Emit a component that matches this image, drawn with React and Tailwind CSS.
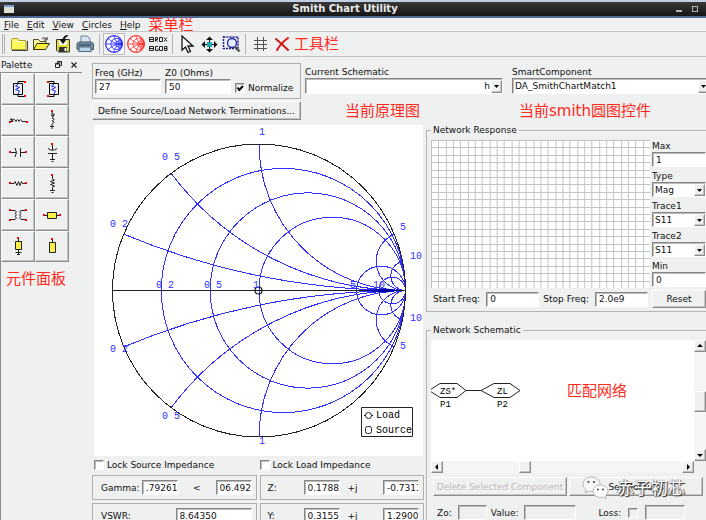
const raised =
  "border border-t-white border-l-white border-r-[#8c8c8c] border-b-[#8c8c8c] bg-[#eff0f0] shadow-[inset_-1px_-1px_0_#c4c4c4]";

const sunken =
  "border border-t-[#858585] border-l-[#858585] border-r-white border-b-white shadow-[inset_1px_1px_0_#bdbdbd]";

const noteClass = "text-[15px] leading-4 whitespace-nowrap text-[#ff2a1c]";

const Field = ({ label, value, className = "", disabled = false }) => (
  <input
    type="text"
    aria-label={label}
    defaultValue={value}
    disabled={disabled}
    className={`h-[15px] min-w-0 rounded-none pl-[3px] outline-none ${sunken} ${disabled ? "bg-[#eff0f0]" : "bg-white"} ${className}`}
  />
);

const Select = ({ id, label, value, className = "", selectClass = "" }) => (
  <span className={`relative block ${className}`}>
    <select
      id={id}
      aria-label={label}
      defaultValue={value}
      className={`h-full w-full appearance-none rounded-none bg-white pr-3 pl-[2px] outline-none ${sunken} ${selectClass}`}
    >
      <option>{value}</option>
    </select>
    <span
      className={`pointer-events-none absolute top-[2px] right-px bottom-px flex w-[11px] items-center justify-center ${raised}`}
    >
      <svg width="5" height="3" viewBox="0 0 5 3" aria-hidden>
        <path d="M0 0h5L2.5 3z" />
      </svg>
    </span>
  </span>
);

const CheckBox = ({ label, hideLabel, defaultChecked, disabled }) => (
  <label className="flex items-center gap-[3px] whitespace-nowrap">
    <span className="relative block h-[10px] w-[10px]">
      <input
        type="checkbox"
        aria-label={label}
        defaultChecked={defaultChecked}
        disabled={disabled}
        className={`peer block h-[10px] w-[10px] appearance-none ${disabled ? "bg-[#eff0f0]" : "bg-white"} ${sunken}`}
      />
      <svg
        className="pointer-events-none absolute inset-0 hidden peer-checked:block"
        viewBox="0 0 10 10"
        fill="none"
        stroke="#000"
        strokeWidth="2"
        aria-hidden
      >
        <path d="M2.5 4.5 4.3 7 8 3" />
      </svg>
    </span>
    {!hideLabel && label}
  </label>
);

const Icon = ({ children, size = 20 }) => (
  <svg width={size} height={size} viewBox="0 0 20 20" fill="none" aria-hidden>
    {children}
  </svg>
);

const smithIcon = (color) => (
  <Icon>
    <g stroke={color} strokeWidth="0.8">
      <circle cx="10" cy="10" r="8.3" fill="#fff" strokeWidth="1.2" />
      <circle cx="12.5" cy="10" r="5.6" />
      <circle cx="15" cy="10" r="3.2" />
      <path d="M1.7 10h16.6M4 4.2Q9 10 18 10Q9 10 4 15.8M10 1.7Q10 8 18 10Q10 12 10 18.3M15.5 4Q13 7.5 18 10Q13 12.5 15.5 16" />
    </g>
  </Icon>
);

const toolGroups = [
  [
    {
      name: "New",
      icon: (
        <Icon>
          <path d="M2.5 15.5V5.5l1-1h5l1.5 2h7v9z" fill="#fbf65a" stroke="#a39a2a" />
          <path d="M3 16.5h15.5V7" stroke="#444" />
          <path d="M4 7.5h12" stroke="#fffccd" />
        </Icon>
      ),
    },
    {
      name: "Open",
      icon: (
        <Icon>
          <path d="M2.5 15.5V5.5h5l1.5 2h6v2" fill="#fdf9a0" stroke="#55501c" />
          <path d="M2.5 15.5 6 9.5h12.5l-4 6z" fill="#f5ee3f" stroke="#333012" />
          <path d="M11 4.5q3-2 5 1m0-2.500v3h-3" stroke="#333" />
        </Icon>
      ),
    },
    {
      name: "Save",
      icon: (
        <Icon>
          <path d="M3.500 5.500h13v12.500h-11l-2-2z" fill="#e3dc2c" stroke="#333" />
          <path d="M6 6h8v5H6z" fill="#fff" />
          <path d="M6 13h8v5H6z" fill="#333" />
          <path d="M11.500 14h2v3h-2z" fill="#fff" />
          <path d="M15 1.500q-5 0-5 5M7 5.500l3 4 3-4z" stroke="#111" fill="#111" />
        </Icon>
      ),
    },
    {
      name: "Print",
      icon: (
        <Icon>
          <path d="M6 9V2h6l3 2.500V9z" fill="#d5e5f2" stroke="#6c8094" />
          <path d="M2 9.500 4 8h12l2.500 1.500v6h-16.500z" fill="#718ba3" stroke="#465a6d" />
          <path d="M4.500 13h11l1 4.500h-13z" fill="#b6d3ea" stroke="#53687c" />
          <path d="M4 11h12" stroke="#2f4152" />
        </Icon>
      ),
    },
  ],
  [
    { name: "Impedance circles", icon: smithIcon("#2222ff"), pressed: true },
    { name: "Admittance circles", icon: smithIcon("#ff2b2b") },
    {
      name: "Circle options",
      icon: (
        <Icon>
          <g stroke="#222" strokeWidth="1">
            <path d="M1.500 3.500h4v4h-4zM2 5.500h3M7.500 7.500v-4h2v2h-2l2 2M11.500 3.500h3v4h-3zM16 3.500l3 4M19 3.500l-3 4" />
            <path d="M1.500 12.500h4v4h-4zM2 14.500h3M10 12.500H7.500v4H10v-2M11.500 12.500h3v4h-3zM16.500 12.500h2.500v4h-2.500zM16.500 14.500h2.500" />
          </g>
        </Icon>
      ),
    },
  ],
  [
    {
      name: "Select",
      icon: (
        <Icon>
          <path d="M5 2v14l3.500-3 2.500 5.500 2.500-1-2.500-5.500H16z" fill="#fff" stroke="#111" strokeWidth="1.300" />
        </Icon>
      ),
    },
    {
      name: "Pan",
      icon: (
        <Icon>
          <path d="M8 8h5v5H8z" fill="#1aa7a7" />
          <path
            d="M10.500 2.500 14 6H7zM10.500 18.500 14 15H7zM2.500 10.500 6 7v7zM18.500 10.500 15 7v7z"
            fill="#111"
          />
          <path d="M10.500 5v3M10.500 13v3M5 10.500h3M13 10.500h3" stroke="#111" />
        </Icon>
      ),
    },
    {
      name: "Zoom area",
      icon: (
        <Icon>
          <path d="M2.500 3h14.500v11.500H2.500z" stroke="#1b1b8e" strokeWidth="1.500" strokeDasharray="2 1" />
          <circle cx="11" cy="9" r="4.500" fill="#e8ecff" stroke="#22229a" strokeWidth="1.300" />
          <path d="m14 12.500 4.500 5" stroke="#555" strokeWidth="2.500" />
        </Icon>
      ),
    },
  ],
  [
    {
      name: "Grid",
      icon: (
        <Icon>
          <path d="M7.500 3v14M13.500 3v14M4 6.500h13M4 10.500h13M4 14.500h13" stroke="#555" />
        </Icon>
      ),
    },
    {
      name: "Delete",
      icon: (
        <Icon>
          <path d="M4 5q6 5 12 11M16 4Q9 9 5 16" stroke="#d31818" strokeWidth="2" strokeLinecap="round" />
        </Icon>
      ),
    },
  ],
];

const Pins = ({ points }) =>
  points.map(([x, y]) => (
    <rect key={`${x}-${y}`} x={x - 1} y={y - 1} width="2" height="2" fill="#f00" />
  ));

const palette = [
  {
    name: "Source termination",
    icon: (
      <Icon>
        <path d="M5.500 4.500h9v11h-9zM10 5V2.500h6M10 15v2.500h6" stroke="#000" />
        <path d="M10 5 7.500 7l4 1.500-4 2 4 1.500L10 15" stroke="#22f" />
        <Pins points={[[17, 3], [17, 17]]} />
      </Icon>
    ),
  },
  {
    name: "Load termination",
    icon: (
      <Icon>
        <path d="M7.500 4.500h9v11h-9zM12 5V2.500H6M12 15v2.500H6" stroke="#000" />
        <path d="M12 5 9.500 7l4 1.500-4 2 4 1.500L12 15" stroke="#22f" />
        <Pins points={[[6, 3], [6, 17]]} />
      </Icon>
    ),
  },
  {
    name: "Series inductor",
    icon: (
      <Icon>
        <path d="M2 11.500h3q-1-3-2-3t0 2q3-3 5 1 1.500-4 3 0 1.500-4 3 0h4" stroke="#222" />
        <Pins points={[[2, 12], [19, 12]]} />
      </Icon>
    ),
  },
  {
    name: "Shunt inductor",
    icon: (
      <Icon>
        <path d="M10 1v3q3-1 2 1.500-2 1-3-.500 4 1 1 3 4 1 0 3 4 1 0 3v4M8 16.500h4M9.500 18.500h1" stroke="#222" />
        <Pins points={[[10, 1]]} />
      </Icon>
    ),
  },
  {
    name: "Series capacitor",
    icon: (
      <Icon>
        <path d="M2 10.500h6M7 6q3 4.500 0 9M12.500 6v9M12.500 10.500H18" stroke="#222" />
        <Pins points={[[2, 10], [18, 10]]} />
      </Icon>
    ),
  },
  {
    name: "Shunt capacitor",
    icon: (
      <Icon>
        <path d="M10.500 2v6M6 6.500q4.500 3.500 9 0M6 11.500h9M10.500 11.500V18M8 17.500h5M9.500 19.500h2" stroke="#222" />
        <Pins points={[[10, 2]]} />
      </Icon>
    ),
  },
  {
    name: "Series resistor",
    icon: (
      <Icon>
        <path d="M2 10.500h4l1-2 2 4 1.500-4 1.500 4 1.500-4 1 2H18" stroke="#222" />
        <Pins points={[[2, 10], [18, 10]]} />
      </Icon>
    ),
  },
  {
    name: "Shunt resistor",
    icon: (
      <Icon>
        <path d="M10.500 2v4l2 1-4 1.500 4 1.500-4 1.500 4 1.500-2 1V18M8 17.500h5M9.500 19.500h2" stroke="#222" />
        <Pins points={[[10, 2]]} />
      </Icon>
    ),
  },
  {
    name: "Transformer",
    icon: (
      <Icon>
        <path d="M2 5.500h5q3 1 0 3 3 1 0 3 3 1 0 3H2M18 5.500h-5q-3 1 0 3-3 1 0 3-3 1 0 3h5" stroke="#222" />
        <Pins points={[[2, 5], [2, 15], [18, 5], [18, 15]]} />
      </Icon>
    ),
  },
  {
    name: "Series line",
    icon: (
      <Icon>
        <path d="M2 10.500h16" stroke="#222" />
        <path d="M5.500 7.500h9v6h-9z" fill="#fbf04a" stroke="#222" />
        <Pins points={[[2, 10], [18, 10]]} />
      </Icon>
    ),
  },
  {
    name: "Shorted stub",
    icon: (
      <Icon>
        <path d="M10.500 2v16M7.500 16.500h6M9 18.500h3" stroke="#222" />
        <path d="M7.500 5.500h6v8h-6z" fill="#fbf04a" stroke="#222" />
        <Pins points={[[10, 2]]} />
      </Icon>
    ),
  },
  {
    name: "Open stub",
    icon: (
      <Icon>
        <path d="M10.500 3v6" stroke="#222" />
        <path d="M7.500 6.500h6v10h-6z" fill="#fbf04a" stroke="#222" />
        <Pins points={[[10, 3]]} />
      </Icon>
    ),
  },
];

const CX = 165;
const CY = 165.5;
const R = 146.5;
const steps = [0.2, 0.5, 1, 5, 10];

// constant-reactance arc, from the rim to the open-circuit point
const reactanceArc = (x, sign) => {
  const px = CX + (R * (x * x - 1)) / (x * x + 1);
  const py = CY - (sign * R * 2 * x) / (x * x + 1);
  const r = R / x;
  return `M${px} ${py}A${r} ${r} 0 0 ${sign > 0 ? 0 : 1} ${CX + R} ${CY}`;
};

const chartLabels = [
  ["1", 165, 10],
  ["0 5", 68, 35],
  ["0 2", 16, 102],
  ["5", 306, 105],
  ["10", 316, 134],
  ["0 2", 62, 163],
  ["0 5", 110, 163],
  ["1", 159, 163],
  ["5", 256, 163],
  ["10", 279, 163],
  ["10", 316, 196],
  ["5", 306, 224],
  ["0 2", 16, 227],
  ["0 5", 68, 294],
  ["1", 165, 319],
];

const SmithChart = () => (
  <svg
    viewBox="0 0 329 331"
    className="block w-full bg-white font-['Liberation_Mono',monospace] text-[10px]"
    role="img"
    aria-label="Smith chart"
  >
    <g fill="none" shapeRendering="crispEdges">
      <g stroke="#3030ff">
        {steps.map((r) => (
          <circle key={r} cx={CX + (R * r) / (r + 1)} cy={CY} r={R / (r + 1)} />
        ))}
        {steps.map((x) => (
          <path key={x} d={reactanceArc(x, 1) + reactanceArc(x, -1)} />
        ))}
      </g>
      <circle cx={CX} cy={CY} r={R} stroke="#222" />
      <path d={`M${CX - R} ${CY}H${CX + R}`} stroke="#222" />
    </g>
    <path d="M270 165.500 292 163.500 306 165.500 292 167.500z" fill="#0000a0" />
    <circle cx="164.500" cy="165.500" r="3.500" fill="none" stroke="#111" strokeWidth="1.200" />
    <g fill="#3030ff">
      {chartLabels.map(([text, x, y]) => (
        <text key={`${x}-${y}`} x={x} y={y}>
          {text}
        </text>
      ))}
    </g>
    <g fill="none" stroke="#222">
      <path d="M267.500 282.500h51v29h-51z" />
      <circle cx="274.500" cy="290.500" r="3" />
      <path d="M270 290.500h2M277 290.500h2" />
      <rect x="271.500" y="301.500" width="6" height="7" rx="2" />
    </g>
    <text x="282" y="293">Load</text>
    <text x="282" y="308">Source</text>
  </svg>
);

const gridPath = () => {
  let d = "";
  for (let i = 0; i < 30; i++) d += `M${Math.round((i * 220) / 30) + 0.5} 0V148`;
  for (let i = 0; i < 20; i++) d += `M0 ${Math.round((i * 148) / 20) + 0.5}H220`;
  return d;
};

const traceControls = [
  { id: "max", label: "Max", value: "1" },
  { id: "type", label: "Type", value: "Mag", select: true },
  { id: "trace1", label: "Trace1", value: "S11", select: true },
  { id: "trace2", label: "Trace2", value: "S11", select: true },
  { id: "min", label: "Min", value: "0" },
];

const Group = ({ title, className = "", children }) => (
  <fieldset className={`min-w-0 border border-r-0 border-[#b4b4b4] pt-1 pl-1 ${className}`}>
    <legend className="ml-0 px-[2px] leading-3">{title}</legend>
    {children}
  </fieldset>
);

const arrows = {
  up: "M0 4h6L3 1z",
  down: "M0 2h6L3 5z",
  left: "M4 0v6L1 3z",
  right: "M2 0v6l3-3z",
};

const ScrollArrow = ({ dir }) => (
  <button
    type="button"
    aria-label={`Scroll ${dir}`}
    className={`flex h-3 w-3 shrink-0 items-center justify-center ${raised}`}
  >
    <svg width="6" height="6" viewBox="0 0 6 6" aria-hidden>
      <path d={arrows[dir]} />
    </svg>
  </button>
);

const TitleBar = () => (
  <header className="flex h-[18px] items-center border-t-2 border-b-2 border-t-[#c3cfe2] border-b-[#4c6a94] bg-linear-to-b from-[#3a3a3a] to-[#161616] px-1">
    <span className="block h-2 w-[10px] border-t-2 border-[#7ba0d4] bg-[#e0e0d8]" />
    <h1 className="flex-1 text-center text-[10px] leading-3 font-bold text-[#ececec]">
      Smith Chart Utility
    </h1>
    <button type="button" aria-label="Minimize" className="mr-[10px] flex h-[6px] w-[6px] items-end">
      <span className="h-[2px] w-full bg-[#b5b5b5]" />
    </button>
    <button type="button" aria-label="Maximize" className="mr-1 h-[6px] w-[6px] border border-[#b5b5b5]" />
  </header>
);

const MenuBar = () => (
  <nav className="flex h-[14px] items-center gap-2 border-b border-[#c6c6c6] pl-1" aria-label="Menu">
    {["File", "Edit", "View", "Circles", "Help"].map((item) => (
      <button key={item} type="button">
        <span className="underline">{item[0]}</span>
        {item.slice(1)}
      </button>
    ))}
    <span className={noteClass}>菜单栏</span>
  </nav>
);

const Toolbar = () => (
  <div className="flex h-[25px] items-center border-b border-[#c2c2c2]" role="toolbar" aria-label="Tools">
    <span className="mr-[3px] ml-[2px] h-5 w-[3px] border-x border-[#b0b0b0]" />
    {toolGroups.map((group, i) => (
      <div key={i} className="flex items-center">
        {i > 0 && <span className="mx-[3px] h-5 w-px bg-[#b4b4b4]" />}
        {group.map((tool) => (
          <button
            key={tool.name}
            type="button"
            aria-label={tool.name}
            aria-pressed={tool.pressed}
            className={`flex h-[22px] w-[22px] items-center justify-center ${
              tool.pressed ? "border border-[#bcbcbc] bg-[#f8f8f8]" : ""
            }`}
          >
            {tool.icon}
          </button>
        ))}
      </div>
    ))}
    <span className={`pl-px ${noteClass}`}>工具栏</span>
  </div>
);

const Palette = () => (
  <aside className="flex w-[82px] shrink-0 flex-col">
    <div className="flex h-4 items-center border-b border-[#8c8c8c] pl-px">
      <h2 className="flex-1">Palette</h2>
      <button type="button" aria-label="Float" className="mr-[7px]">
        <svg width="8" height="8" viewBox="0 0 8 8" fill="none" stroke="#222" aria-hidden>
          <path d="M2.500 2V.500h4v4H5M.500 2.500h4v4h-4zM.500 3h4M2.500 1h4" />
        </svg>
      </button>
      <button type="button" aria-label="Close" className="mr-1">
        <svg width="8" height="8" viewBox="0 0 8 8" fill="none" stroke="#222" strokeWidth="1.200" aria-hidden>
          <path d="m1.500 1.500 5 5m0-5-5 5" />
        </svg>
      </button>
    </div>
    <div className="flex-1 border-l border-[#8c8c8c]">
      <div className="grid h-[189px] w-[68px] grid-cols-2 grid-rows-6">
        {palette.map((part) => (
          <button
            key={part.name}
            type="button"
            aria-label={part.name}
            className={`flex items-center justify-center ${raised}`}
          >
            {part.icon}
          </button>
        ))}
      </div>
      <p className={`mt-[9px] pl-[5px] ${noteClass}`}>元件面板</p>
    </div>
  </aside>
);

const TopRow = () => (
  <div className="flex">
    <div className="w-[209px] shrink-0">
      <div className="flex h-9 gap-1 border border-[#aeaeae] px-[2px] pt-[3px]">
        <label className="w-[66px] leading-3">
          Freq (GHz)
          <Field value="27" className="block w-full" />
        </label>
        <label className="w-[66px] leading-3">
          Z0 (Ohms)
          <Field value="50" className="block w-full" />
        </label>
        <div className="self-end pb-1">
          <CheckBox label="Normalize" defaultChecked />
        </div>
      </div>
      <button type="button" className={`mt-[2px] h-[19px] w-full whitespace-nowrap ${raised}`}>
        Define Source/Load Network Terminations...
      </button>
    </div>
    <div className="ml-1 w-[198px] shrink-0 pt-[3px]">
      <label htmlFor="schematic" className="block leading-3">
        Current Schematic
      </label>
      <Select id="schematic" value="h" className="h-4" selectClass="text-right [text-align-last:right]" />
      <p className={`mt-[9px] pl-10 ${noteClass}`}>当前原理图</p>
    </div>
    <div className="-mr-1 ml-[9px] min-w-0 flex-1 pt-[3px]">
      <label htmlFor="component" className="block leading-3">
        SmartComponent
      </label>
      <Select id="component" value="DA_SmithChartMatch1" className="h-4" />
      <p className={`mt-[9px] pl-[7px] ${noteClass}`}>当前smith圆图控件</p>
    </div>
  </div>
);

const readoutBox = "flex h-[25px] items-center border border-[#aeaeae] pr-1";

const Readouts = () => (
  <div className="mt-px grid grid-cols-2 gap-[3px]">
    <div className="flex h-[15px] items-center pl-[2px]">
      <CheckBox label="Lock Source Impedance" />
    </div>
    <div className="flex h-[15px] items-center">
      <CheckBox label="Lock Load Impedance" />
    </div>
    <div className={`${readoutBox} pl-2`}>
      <span className="w-[41px]">Gamma:</span>
      <Field label="Gamma magnitude" value=".79261" className="w-9" />
      <span className="flex-1 text-center">&lt;</span>
      <Field label="Gamma angle" value="06.492" className="w-9" />
    </div>
    <div className={`${readoutBox} pl-[7px]`}>
      <span className="w-9">Z:</span>
      <Field label="Z real" value="0.17889" className="w-9" />
      <span className="flex-1 pl-2">+j</span>
      <Field label="Z imaginary" value="-0.7313" className="w-9" />
    </div>
    <div className={`${readoutBox} pl-2`}>
      <span className="flex-1">VSWR:</span>
      <Field label="VSWR" value="8.64350" className="w-[76px]" />
    </div>
    <div className={`${readoutBox} pl-[7px]`}>
      <span className="w-9">Y:</span>
      <Field label="Y real" value="0.31554" className="w-9" />
      <span className="flex-1 pl-2">+j</span>
      <Field label="Y imaginary" value="1.29008" className="w-9" />
    </div>
  </div>
);

const NetworkResponse = () => (
  <Group title="Network Response" className="pb-[3px]">
    <div className="flex gap-[2px]">
      <svg
        viewBox="0 0 220 148"
        preserveAspectRatio="none"
        className="h-[148px] min-w-0 flex-1 bg-white"
        role="img"
        aria-label="Response plot"
      >
        <path d={gridPath()} stroke="#c4c4c4" shapeRendering="crispEdges" />
      </svg>
      <div className="flex w-[54px] shrink-0 flex-col gap-[3px]">
        {traceControls.map((c) => (
          <label key={c.id} className="block leading-3">
            {c.label}
            {c.select ? (
              <Select id={c.id} label={c.label} value={c.value} className="h-[15px]" />
            ) : (
              <Field label={c.label} value={c.value} className="block w-full" />
            )}
          </label>
        ))}
      </div>
    </div>
    <div className="mt-[2px] flex items-center gap-[2px]">
      <div className="flex flex-1 items-center justify-between pr-[2px] pl-[2px]">
        <label className="flex items-center gap-[6px] whitespace-nowrap">
          Start Freq:
          <Field value="0" className="w-[53px]" />
        </label>
        <label className="flex items-center gap-[6px] whitespace-nowrap">
          Stop Freq:
          <Field value="2.0e9" className="w-[53px]" />
        </label>
      </div>
      <button type="button" className={`h-[18px] w-[54px] ${raised}`}>
        Reset
      </button>
    </div>
  </Group>
);

const Watermark = () => (
  <div className="pointer-events-none absolute -top-px left-[151px] flex items-center gap-2">
    <svg width="27" height="24" viewBox="0 0 27 24" stroke="#a8a8a8" strokeWidth="0.800" aria-hidden>
      <path d="M9.500 1C4.500 1 1 4.300 1 8.200c0 2.300 1.200 4.300 3 5.600l-1 3 3.600-1.700c6 1.500 11.400-1.900 11.400-6.900C18 4.300 14.500 1 9.500 1z" fill="#f6f6f6" />
      <path d="M18.500 9C14 9 11 11.900 11 15.300s3 6.200 7.500 6.200c1 0 1.900-.2 2.700-.4l3 1.500-.8-2.600c1.600-1.200 2.600-2.800 2.600-4.700C26 11.900 23 9 18.500 9z" fill="#fff" />
      <g fill="#444" stroke="none">
        <circle cx="6.500" cy="6" r="1.100" />
        <circle cx="12" cy="6" r="1.100" />
        <circle cx="16" cy="13.500" r="1" />
        <circle cx="21" cy="13.500" r="1" />
      </g>
    </svg>
    <span className="text-[17px] leading-5 whitespace-nowrap text-white [text-shadow:1px_1px_1px_#222,-1px_0_1px_#777]">
      赤子初芯
    </span>
  </div>
);

const NetworkSchematic = () => (
  <Group title="Network Schematic" className="mt-3 pb-2">
    <div className="flex">
      <div className="min-w-0 flex-1">
        <div className="flex h-[121px] items-center overflow-hidden bg-white">
          <svg
            width="90"
            height="121"
            viewBox="0 0 90 121"
            className="shrink-0 font-['Liberation_Mono',monospace] text-[9px]"
            role="img"
            aria-label="Matching network"
          >
            <g fill="none" stroke="#222">
              <path d="M-2 50.500 9 43.500H26L35 50.500 26 57.500H9zM50 50.500 63 43.500H79L89 50.500 79 57.500H63zM35 50.500H50" />
            </g>
            <text x="9" y="54">ZS*</text>
            <text x="66" y="54">ZL</text>
            <text x="9" y="67">P1</text>
            <text x="66" y="67">P2</text>
          </svg>
          <span className={`mb-5 ml-[46px] ${noteClass}`}>匹配网络</span>
        </div>
        <div className="flex h-3 bg-[#f5f5f5]">
          <ScrollArrow dir="left" />
          <span className="w-[76px]" />
          <span className={`h-3 w-3 ${raised}`} />
          <span className="flex-1" />
          <ScrollArrow dir="right" />
        </div>
      </div>
      <div className="flex h-[121px] w-3 shrink-0 flex-col bg-[#f5f5f5]">
        <ScrollArrow dir="up" />
        <span className="h-[39px]" />
        <span className={`h-[21px] w-3 ${raised}`} />
        <span className="flex-1" />
        <ScrollArrow dir="down" />
      </div>
    </div>
    <div className="relative mt-1 grid grid-cols-2 gap-[2px] pr-[3px] pl-[2px]">
      <button
        type="button"
        disabled
        className={`h-[19px] whitespace-nowrap text-[#b5b5b5] [text-shadow:1px_1px_0_#fff] ${raised}`}
      >
        Delete Selected Component
      </button>
      <button type="button" className={`h-[19px] ${raised}`}>
        Set Defaults
      </button>
      <Watermark />
    </div>
    <div className="mt-[9px] flex items-center gap-1 pl-[6px]">
      <label className="flex items-center gap-[6px]">
        Zo:
        <Field disabled className="w-[29px]" />
      </label>
      <label className="flex items-center gap-[6px]">
        Value:
        <Field disabled className="w-[52px]" />
      </label>
      <div className="ml-[18px] flex items-center gap-[7px]">
        Loss:
        <CheckBox label="Loss" hideLabel disabled />
        <Field label="Loss value" disabled className="w-10" />
      </div>
    </div>
  </Group>
);

export default function App() {
  return (
    <div className="flex h-screen flex-col overflow-hidden bg-[#eff0f0] font-['DejaVu_Sans','Noto_Sans_CJK_SC',sans-serif] text-[9px] leading-3 text-[#111]">
      <TitleBar />
      <MenuBar />
      <Toolbar />
      <div className="flex min-h-0 flex-1">
        <Palette />
        <main className="min-w-0 flex-1 pt-[6px] pl-[10px]">
          <TopRow />
          <div className="mt-1 flex gap-[2px]">
            <section className="w-[332px] shrink-0">
              <div className="pt-px pr-px pl-[2px]">
                <SmithChart />
              </div>
              <Readouts />
            </section>
            <section className="min-w-0 flex-1">
              <NetworkResponse />
              <NetworkSchematic />
            </section>
          </div>
        </main>
      </div>
    </div>
  );
}
